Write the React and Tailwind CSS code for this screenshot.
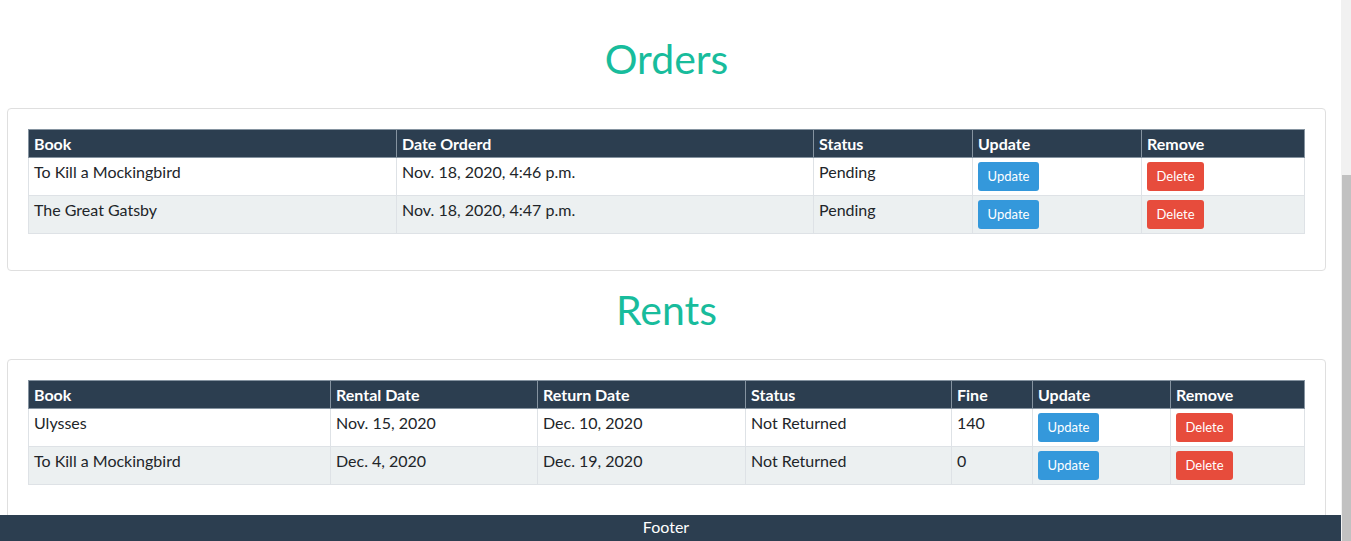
import React from "react";

const orders = [
  { book: "To Kill a Mockingbird", date: "Nov. 18, 2020, 4:46 p.m.", status: "Pending" },
  { book: "The Great Gatsby", date: "Nov. 18, 2020, 4:47 p.m.", status: "Pending" },
];

const rents = [
  { book: "Ulysses", rental: "Nov. 15, 2020", ret: "Dec. 10, 2020", status: "Not Returned", fine: "140" },
  { book: "To Kill a Mockingbird", rental: "Dec. 4, 2020", ret: "Dec. 19, 2020", status: "Not Returned", fine: "0" },
];

function Th({ children, w }) {
  return (
    <th className={`${w} border border-[#8593a0] bg-[#2c3e50] px-[5px] h-[28px] text-left font-bold text-white leading-[24px]`}>
      {children}
    </th>
  );
}

function Td({ children }) {
  return (
    <td className="border border-[#dee2e6] px-[5px] pt-[2px] pb-[3px] h-[38px] align-top leading-[24px]">
      {children}
    </td>
  );
}

function Btn({ color, w, children }) {
  return (
    <button className={`${color} ${w} mt-[2px] h-[29px] rounded-[3px] text-[13px] text-white leading-[29px] text-center block`}>
      {children}
    </button>
  );
}

function Heading({ children }) {
  return (
    <h1 className="text-center text-[41px] leading-[50px] text-[#18bc9c] font-normal mb-[24px]">
      {children}
    </h1>
  );
}

function Card({ children }) {
  return (
    <div className="border border-[#dfdfdf] rounded-[4px] px-[20px] pt-[20px] pb-[36px] bg-white">
      {children}
    </div>
  );
}

export default function App() {
  return (
    <div
      className="flex w-[1351px] h-[541px] overflow-hidden bg-white text-[16px] text-[#212529]"
      style={{ fontFamily: "Lato, 'Open Sans', sans-serif" }}
    >
      <div className="flex flex-col w-[1341px] h-[541px]">
        <div className="flex-1 overflow-hidden pl-[7px] pr-[15px] pt-[34px]">
          <Heading>Orders</Heading>
          <Card>
            <table className="w-full border-collapse">
              <thead>
                <tr>
                  <Th w="w-[368px]">Book</Th>
                  <Th w="w-[417px]">Date Orderd</Th>
                  <Th w="w-[159px]">Status</Th>
                  <Th w="w-[169px]">Update</Th>
                  <Th w="">Remove</Th>
                </tr>
              </thead>
              <tbody>
                {orders.map((o, i) => (
                  <tr key={i} className={i % 2 === 1 ? "bg-[#ecf0f1]" : "bg-white"}>
                    <Td>{o.book}</Td>
                    <Td>{o.date}</Td>
                    <Td>{o.status}</Td>
                    <Td>
                      <Btn color="bg-[#3498db]" w="w-[61px]">Update</Btn>
                    </Td>
                    <Td>
                      <Btn color="bg-[#e74c3c]" w="w-[57px]">Delete</Btn>
                    </Td>
                  </tr>
                ))}
              </tbody>
            </table>
          </Card>

          <div className="mt-[14px]">
            <Heading>Rents</Heading>
          </div>
          <Card>
            <table className="w-full border-collapse">
              <thead>
                <tr>
                  <Th w="w-[302px]">Book</Th>
                  <Th w="w-[207px]">Rental Date</Th>
                  <Th w="w-[208px]">Return Date</Th>
                  <Th w="w-[206px]">Status</Th>
                  <Th w="w-[81px]">Fine</Th>
                  <Th w="w-[138px]">Update</Th>
                  <Th w="">Remove</Th>
                </tr>
              </thead>
              <tbody>
                {rents.map((r, i) => (
                  <tr key={i} className={i % 2 === 1 ? "bg-[#ecf0f1]" : "bg-white"}>
                    <Td>{r.book}</Td>
                    <Td>{r.rental}</Td>
                    <Td>{r.ret}</Td>
                    <Td>{r.status}</Td>
                    <Td>{r.fine}</Td>
                    <Td>
                      <Btn color="bg-[#3498db]" w="w-[61px]">Update</Btn>
                    </Td>
                    <Td>
                      <Btn color="bg-[#e74c3c]" w="w-[57px]">Delete</Btn>
                    </Td>
                  </tr>
                ))}
              </tbody>
            </table>
          </Card>
        </div>
        <footer className="h-[26px] bg-[#2c3e50] text-white text-center leading-[24px] pr-[9px]">
          Footer
        </footer>
      </div>
      <div className="w-[10px] h-[541px] bg-[#f1f1f1] flex flex-col pl-[1px]">
        <div className="h-[175px]" />
        <div className="flex-1 bg-[#c1c1c1]" />
      </div>
    </div>
  );
}
